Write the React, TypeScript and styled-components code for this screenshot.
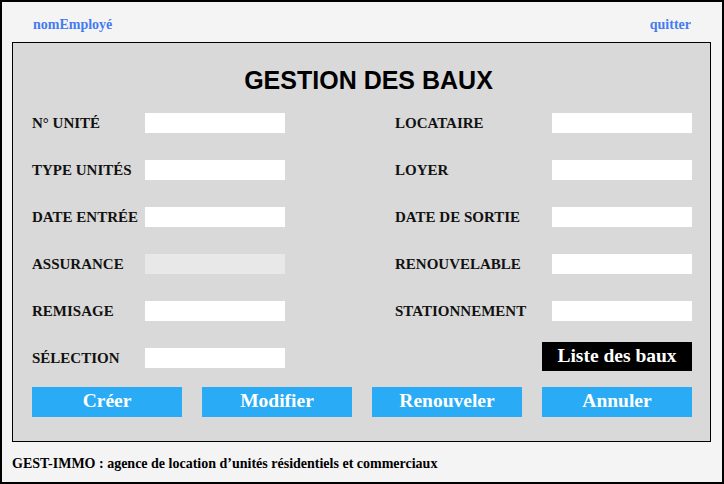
import React from 'react';
import styled, { createGlobalStyle } from 'styled-components';

const GlobalStyle = createGlobalStyle`
  html, body {
    margin: 0;
    padding: 0;
    background: #f5f4f5;
  }
  * {
    box-sizing: border-box;
  }
`;

const Window = styled.div`
  width: 724px;
  height: 484px;
  border: 2px solid #000;
  background: #f5f4f5;
  font-family: 'Liberation Serif', 'Times New Roman', serif;
  display: flex;
  flex-direction: column;
`;

const TopBar = styled.header`
  height: 40px;
  display: flex;
  justify-content: space-between;
  align-items: flex-start;
  padding: 15px 31px 0 31px;
`;

const TopLink = styled.a`
  color: #437bf0;
  font-weight: 700;
  font-size: 14px;
  line-height: 16px;
  text-decoration: none;
  cursor: pointer;
`;

const Panel = styled.main`
  width: 699px;
  height: 400px;
  margin-left: 10px;
  border: 1px solid #000;
  background: #d9d9d9;
  padding: 23px 18px 0 19px;
`;

const Title = styled.h1`
  margin: 0 0 18px;
  padding-left: 13px;
  font-family: 'Liberation Sans', Arial, sans-serif;
  font-size: 25px;
  line-height: 29px;
  font-weight: 700;
  text-align: center;
  color: #000;
`;

const FieldGrid = styled.div`
  display: grid;
  grid-template-columns: 113px 140px 1fr 157px 140px;
  grid-auto-rows: 20px;
  row-gap: 27px;
  align-items: center;
`;

const Label = styled.label<{ $col: number }>`
  grid-column: ${p => p.$col};
  font-size: 15px;
  font-weight: 700;
  color: #111;
  white-space: nowrap;
  line-height: 20px;
`;

const Field = styled.input<{ $col: number }>`
  grid-column: ${p => p.$col};
  width: 140px;
  height: 20px;
  border: none;
  outline: none;
  padding: 0 4px;
  background: #fff;
  font-family: inherit;

  &:disabled {
    background: #e8e8e8;
  }
`;

const ListButton = styled.button`
  grid-column: 4 / 6;
  justify-self: end;
  width: 150px;
  height: 29px;
  margin-top: -4px;
  border: none;
  background: #000;
  color: #fff;
  font-family: 'Liberation Serif', 'Times New Roman', serif;
  font-size: 19.5px;
  font-weight: 700;
  padding: 0;
  cursor: pointer;
`;

const ActionRow = styled.div`
  display: flex;
  gap: 20px;
  margin-top: 19px;
`;

const ActionButton = styled.button`
  width: 150px;
  height: 30px;
  border: none;
  background: #29abf5;
  color: #fff;
  font-family: 'Liberation Serif', 'Times New Roman', serif;
  font-size: 19.5px;
  font-weight: 700;
  padding: 0 0 2px;
  cursor: pointer;
`;

const Footer = styled.footer`
  padding: 14px 0 0 10px;
  font-size: 14px;
  line-height: 16px;
  font-weight: 700;
  color: #000;
`;

const rows: [string, string, boolean?][] = [
  ['N° UNITÉ', 'LOCATAIRE'],
  ['TYPE UNITÉS', 'LOYER'],
  ['DATE ENTRÉE', 'DATE DE SORTIE'],
  ['ASSURANCE', 'RENOUVELABLE', true],
  ['REMISAGE', 'STATIONNEMENT'],
];

const actions = ['Créer', 'Modifier', 'Renouveler', 'Annuler'];

const App: React.FC = () => {
  return (
    <>
      <GlobalStyle />
      <Window>
        <TopBar>
          <TopLink>nomEmployé</TopLink>
          <TopLink>quitter</TopLink>
        </TopBar>

        <Panel>
          <Title>GESTION DES BAUX</Title>

          <FieldGrid>
            {rows.map(([left, right, disabled]) => (
              <React.Fragment key={left}>
                <Label $col={1}>{left}</Label>
                <Field $col={2} disabled={disabled} />
                <Label $col={4}>{right}</Label>
                <Field $col={5} />
              </React.Fragment>
            ))}
            <Label $col={1}>SÉLECTION</Label>
            <Field $col={2} />
            <ListButton>Liste des baux</ListButton>
          </FieldGrid>

          <ActionRow>
            {actions.map(a => (
              <ActionButton key={a}>{a}</ActionButton>
            ))}
          </ActionRow>
        </Panel>

        <Footer>GEST-IMMO : agence de location d’unités résidentiels et commerciaux</Footer>
      </Window>
    </>
  );
};

export default App;
